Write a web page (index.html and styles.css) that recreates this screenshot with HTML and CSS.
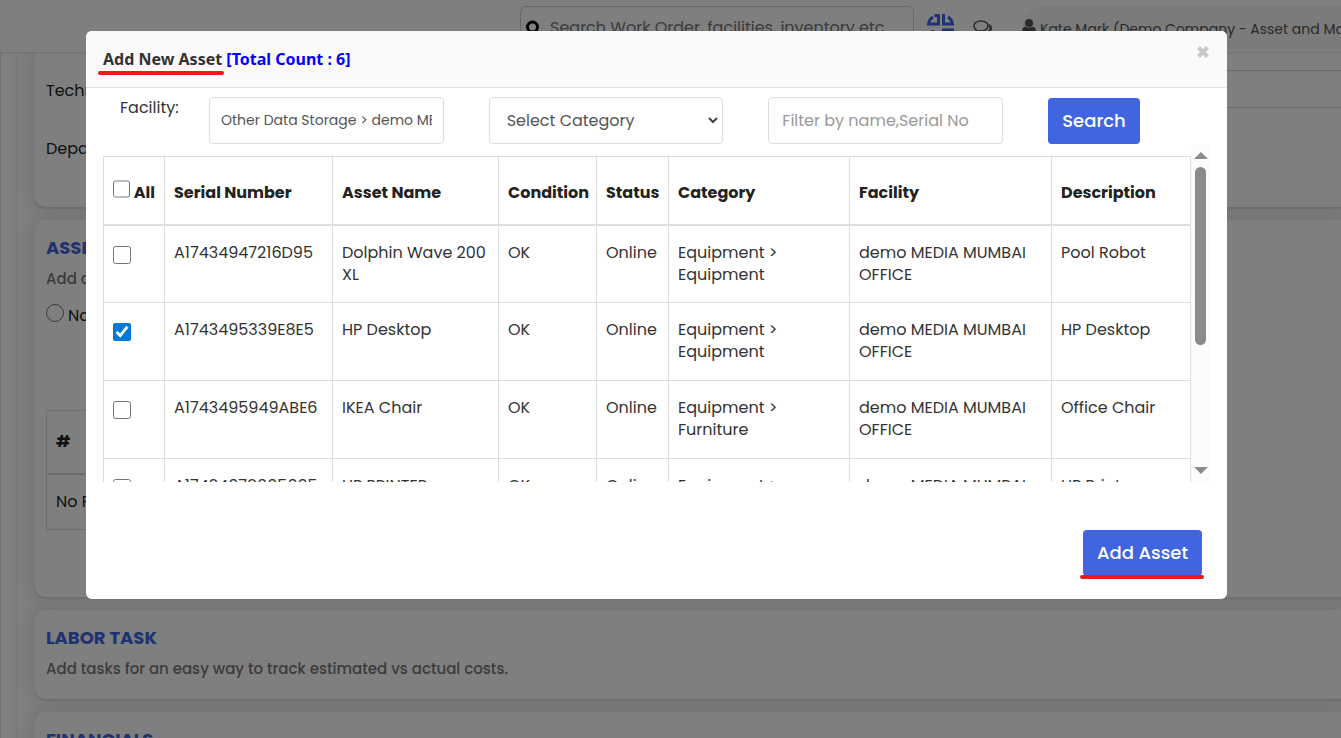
FILE: index.html
```html
<!DOCTYPE html>
<html lang="en">
<head>
<meta charset="utf-8">
<title>Add New Asset</title>
<link rel="stylesheet" href="styles.css">
</head>
<body>
<div class="page">
  <header class="topbar">
    <label class="search">
      <svg class="search-icon" width="16" height="18" viewBox="0 0 16 18" fill="none" stroke="#000" stroke-width="3"><circle cx="6.500" cy="7" r="5"/><path d="M10 11l4 5"/></svg>
      <input type="search" placeholder="Search Work Order, facilities, inventory etc" aria-label="Search">
    </label>
    <svg class="apps-icon" width="28" height="28" viewBox="0 0 28 28" fill="none" stroke="#4164e0" stroke-width="3"><path d="M12.500 1v9H2.500C3 6.500 4.500 4.500 7 3M8.500 1.500h5M17.500 1v9h9C26 6.500 24.500 4.500 22 3M16 1.500h3"/><path d="M7 16v5h5v5M16 16h11c0 4-3 8-6 9.500h-3.500V16" /></svg>
    <svg class="chat-icon" width="20" height="18" viewBox="0 0 20 18" fill="none" stroke="#555" stroke-width="1.500"><path d="M8 1c4 0 7 2.200 7 5s-3 5-7 5c-1 0-1.500 0-2-.2L2.500 13 3.500 10C2 9 1 7.500 1 6c0-2.800 3-5 7-5z"/><path stroke-width="2.500" d="M15.800 5c1.500.8 2 2 2 3.300 0 1.500-.8 2.500-1.800 3.200l.8 2.500-3.500-1.500c-2 .4-3.500 0-4.500-.5"/></svg>
    <div class="profile">
      <svg width="14" height="14" viewBox="0 0 14 14" fill="#555"><ellipse cx="7" cy="4" rx="4" ry="4"/><path d="M0 14c0-4 1-6 3-6.500 2.500 1.500 5.500 1.500 8 0 2 .5 3 2.500 3 6.500z"/></svg>
      <span>Kate Mark (Demo Company - Asset and Maintenance)</span>
    </div>
  </header>
  <div class="workspace">
    <aside class="rail"></aside>
    <main class="cards">
      <section class="card card-details">
        <div class="detail"><label for="tech">Technician</label><input id="tech" type="text"></div>
        <div class="detail"><span>Department</span></div>
      </section>
      <section class="card card-assets">
        <h2>ASSETS</h2>
        <p>Add assets to this work order.</p>
        <label class="choice"><input type="radio" name="asset"> No</label>
        <table class="records">
          <thead><tr><th>#</th></tr></thead>
          <tbody><tr><td>No Record Found</td></tr></tbody>
        </table>
      </section>
      <section class="card card-labor">
        <h2>LABOR TASK</h2>
        <p>Add tasks for an easy way to track estimated vs actual costs.</p>
      </section>
      <section class="card">
        <h2>FINANCIALS</h2>
      </section>
    </main>
  </div>
</div>

<div class="backdrop">
  <div class="modal" role="dialog" aria-modal="true" aria-labelledby="modal-title">
    <div class="modal-header">
      <h1 id="modal-title"><span class="marked">Add New Asset</span> <span class="count">[Total Count : 6]</span></h1>
      <button class="close" type="button" aria-label="Close"><svg width="12" height="12" viewBox="0 0 12 12" stroke="#c8c8c8" stroke-width="4"><path d="M1.500 1.500l9 9M10.500 1.500l-9 9"/></svg></button>
    </div>
    <form class="filters">
      <label class="facility-label" for="facility">Facility:</label>
      <div class="fields">
        <input class="field field-small" id="facility" type="text" value="Other Data Storage &gt; demo MEDIA MUMBAI">
        <div class="select-wrap">
          <select class="field" aria-label="Category"><option>Select Category</option></select>
          <svg class="chevron" width="10" height="7" viewBox="0 0 10 7" fill="none" stroke="#444" stroke-width="2"><path d="M1 1l4 4 4-4"/></svg>
        </div>
        <input class="field" type="text" placeholder="Filter by name,Serial No" aria-label="Filter by name, serial number">
        <button class="btn" type="button">Search</button>
      </div>
    </form>
    <div class="results">
      <div class="table-view">
        <table class="assets">
          <colgroup><col class="c-check"><col class="c-serial"><col class="c-name"><col class="c-cond"><col class="c-status"><col class="c-cat"><col class="c-fac"><col class="c-desc"></colgroup>
          <thead>
            <tr><th><label class="all"><input type="checkbox"> All</label></th><th>Serial Number</th><th>Asset Name</th><th>Condition</th><th>Status</th><th>Category</th><th>Facility</th><th>Description</th></tr>
          </thead>
          <tbody>
            <tr><td><input type="checkbox" aria-label="Dolphin Wave 200 XL"></td><td>A17434947216D95</td><td>Dolphin Wave 200 XL</td><td>OK</td><td>Online</td><td>Equipment &gt; Equipment</td><td>demo MEDIA MUMBAI OFFICE</td><td>Pool Robot</td></tr>
            <tr><td><input type="checkbox" checked aria-label="HP Desktop"></td><td>A1743495339E8E5</td><td>HP Desktop</td><td>OK</td><td>Online</td><td>Equipment &gt; Equipment</td><td>demo MEDIA MUMBAI OFFICE</td><td>HP Desktop</td></tr>
            <tr><td><input type="checkbox" aria-label="IKEA Chair"></td><td>A1743495949ABE6</td><td>IKEA Chair</td><td>OK</td><td>Online</td><td>Equipment &gt; Furniture</td><td>demo MEDIA MUMBAI OFFICE</td><td>Office Chair</td></tr>
            <tr><td><input type="checkbox" aria-label="HP PRINTER"></td><td>A17434978695995</td><td>HP PRINTER</td><td>OK</td><td>Online</td><td>Equipment &gt; Equipment</td><td>demo MEDIA MUMBAI OFFICE</td><td>HP Printer</td></tr>
          </tbody>
        </table>
      </div>
      <div class="scrollbar" aria-hidden="true"><span class="arrow-up"></span><span class="thumb"></span><span class="arrow-down"></span></div>
    </div>
    <div class="modal-footer">
      <button class="btn btn-add" type="button">Add Asset</button>
    </div>
  </div>
</div>
</body>
</html>
```

FILE: styles.css
```css
* { box-sizing: border-box; }

html, body { height: 100%; }

body {
  margin: 0;
  overflow: hidden;
  background: #fff;
  color: #333;
  font-family: Poppins, Inter, "Liberation Sans", sans-serif;
  font-size: 16px;
  line-height: 22px;
}

input, select, button { font: inherit; margin: 0; }

h1, h2, p { margin: 0; }

/* Page behind the dialog */
.page { height: 100%; overflow: hidden; }

.topbar {
  position: relative;
  z-index: 1;
  display: flex;
  height: 52px;
  padding: 6px 0 0 520px;
  overflow: hidden;
  background: #fff;
  box-shadow: 0 1px 2px #ddd;
}

.search {
  display: flex;
  flex: none;
  width: 394px;
  height: 44px;
  padding: 0 5px;
  border: 1px solid #d0d0d0;
  border-radius: 6px;
}

.search-icon { flex: none; margin-top: 13px; }

.search input {
  flex: 1;
  min-width: 0;
  padding: 0 8px;
  border: 0;
  background: none;
}

.search input::placeholder { color: #777; }

.apps-icon { flex: none; margin: 8px 0 0 12px; }
.chat-icon { flex: none; margin: 14px 0 0 19px; }

.profile {
  display: flex;
  flex: none;
  gap: 4px;
  height: 43px;
  margin-left: 29px;
  padding: 13px 20px 0 0;
  border-radius: 22px;
  background: #f7f7f7;
  color: #555;
  font-size: 14px;
  line-height: 20px;
  white-space: nowrap;
}

.workspace { display: flex; height: 100%; }

.rail {
  flex: none;
  width: 18px;
  border-left: 1px solid #e4e4e4;
  border-right: 1px solid #eee;
  background: linear-gradient(to right, #fff 50%, #f8f8f8);
}

.cards {
  display: flex;
  flex: 1;
  flex-direction: column;
  gap: 13px;
  min-width: 0;
  padding-left: 17px;
}

.card {
  flex: none;
  padding: 17px 11px;
  border-radius: 0 0 0 10px;
  background: #fff;
  box-shadow: 0 2px 1px #dadada, 0 0 16px 4px #e6e6e6;
  color: #222;
}

.card + .card { border-radius: 10px 0 0 10px; }
.card-details { height: 155px; padding: 18px 0 0 11px; }
.card-assets { height: 377px; }
.card-labor { height: 89px; }

.card h2 { color: #4164e0; font-size: 18px; font-weight: 700; }
.card p { margin-top: 9px; color: #777; font-size: 15px; font-weight: 500; }

.detail { display: flex; align-items: center; height: 38px; margin-bottom: 20px; }
.detail label { width: 180px; }
.detail label, .detail span { padding-top: 3px; }
.detail input { flex: 1; height: 38px; border: 1px solid #ccc; border-right: 0; }

.choice { display: flex; gap: 4px; margin-top: 14px; line-height: 24px; }
.choice input { width: 18px; height: 18px; }

.records { width: 90%; margin-top: 82px; border-collapse: collapse; text-align: left; }
.records th, .records td { padding: 0 9px; border: 1px solid #ddd; }
.records th { height: 63px; border-bottom-width: 2px; }
.records td { height: 56px; }

/* Dialog */
.backdrop {
  position: fixed;
  z-index: 2;
  inset: 0;
  padding: 31px 114px 0 86px;
  background: rgba(0, 0, 0, 0.5);
}

.modal { overflow: hidden; border-radius: 6px; background: #fff; }

.modal-header {
  display: flex;
  justify-content: space-between;
  height: 57px;
  padding: 15px 18px 0 17px;
  border-bottom: 1px solid #e3e3e3;
  background: #fafafa;
}

.modal-header h1 { margin-top: 2px; font: 700 16px/22px "Noto Sans", "Open Sans", sans-serif; }

.marked, .btn-add { position: relative; }

.marked::after, .btn-add::after {
  content: "";
  position: absolute;
  right: -2px;
  bottom: -5px;
  left: -5px;
  height: 4px;
  border-radius: 2px;
  background: #e91c1c;
}

.btn-add::after { bottom: -3px; left: -3px; }

.count { color: #00f; }

.close {
  display: flex;
  align-self: flex-start;
  padding: 0;
  border: 0;
  background: none;
}

.filters { display: flex; padding: 9px 87px 0 34px; }
.facility-label { flex: none; width: 89px; }

.fields {
  display: grid;
  flex: 1;
  grid-template-columns: repeat(3, minmax(0, 1fr)) 92px;
  gap: 45px;
}

.field {
  width: 100%;
  height: 47px;
  padding: 0 13px;
  border: 1px solid #ddd;
  border-radius: 4px;
  background: #fff;
  color: #555;
}

.field::placeholder { color: #999; }
.field-small { padding: 0 11px; font-size: 14px; }
.select-wrap { position: relative; }
.select-wrap .field { padding: 0 17px; appearance: none; }
.chevron { position: absolute; top: 20px; right: 5px; pointer-events: none; }

.btn {
  height: 46px;
  padding: 0;
  border: 0;
  border-radius: 4px;
  background: #4164e0;
  color: #fff;
  font-size: 18px;
  font-weight: 500;
  white-space: nowrap;
}

.fields .btn { margin-top: 1px; }

.results { display: flex; height: 338px; padding: 0 17px; }
.table-view { flex: 1; overflow: hidden; padding-top: 12px; }

.assets {
  width: 100%;
  table-layout: fixed;
  border-collapse: collapse;
  text-align: left;
}

.assets th, .assets td { padding: 0 9px; border: 1px solid #ddd; }

.assets th {
  height: 68px;
  padding-top: 5px;
  border-bottom-width: 2px;
  color: #222;
  font-weight: 700;
  white-space: nowrap;
}

.assets td { height: 78px; padding-top: 16px; vertical-align: top; }
.assets input { display: block; width: 18px; height: 18px; accent-color: #0078d7; }
.assets td input { margin-top: 4px; }
.all { display: flex; align-items: center; gap: 4px; }
.assets .all input { margin-bottom: 8px; }

.c-check { width: 61px; }
.c-serial { width: 168px; }
.c-name { width: 166px; }
.c-cond { width: 98px; }
.c-status { width: 72px; }
.c-cat { width: 181px; }
.c-fac { width: 202px; }
.c-desc { width: 139px; }

.scrollbar {
  display: flex;
  flex: none;
  flex-direction: column;
  align-items: center;
  width: 19px;
  padding: 8px 0;
  background: #fcfcfc;
}

.arrow-up, .arrow-down { border: 7px solid transparent; }
.arrow-up { border-top: 0; border-bottom-color: #8b8b8b; }
.arrow-down { margin-top: auto; border-bottom: 0; border-top-color: #8b8b8b; }
.thumb { width: 11px; height: 178px; margin-top: 8px; border-radius: 6px; background: #8b8b8b; }

.modal-footer { display: flex; justify-content: flex-end; padding: 48px 25px 23px; }
.btn-add { width: 119px; }
```
